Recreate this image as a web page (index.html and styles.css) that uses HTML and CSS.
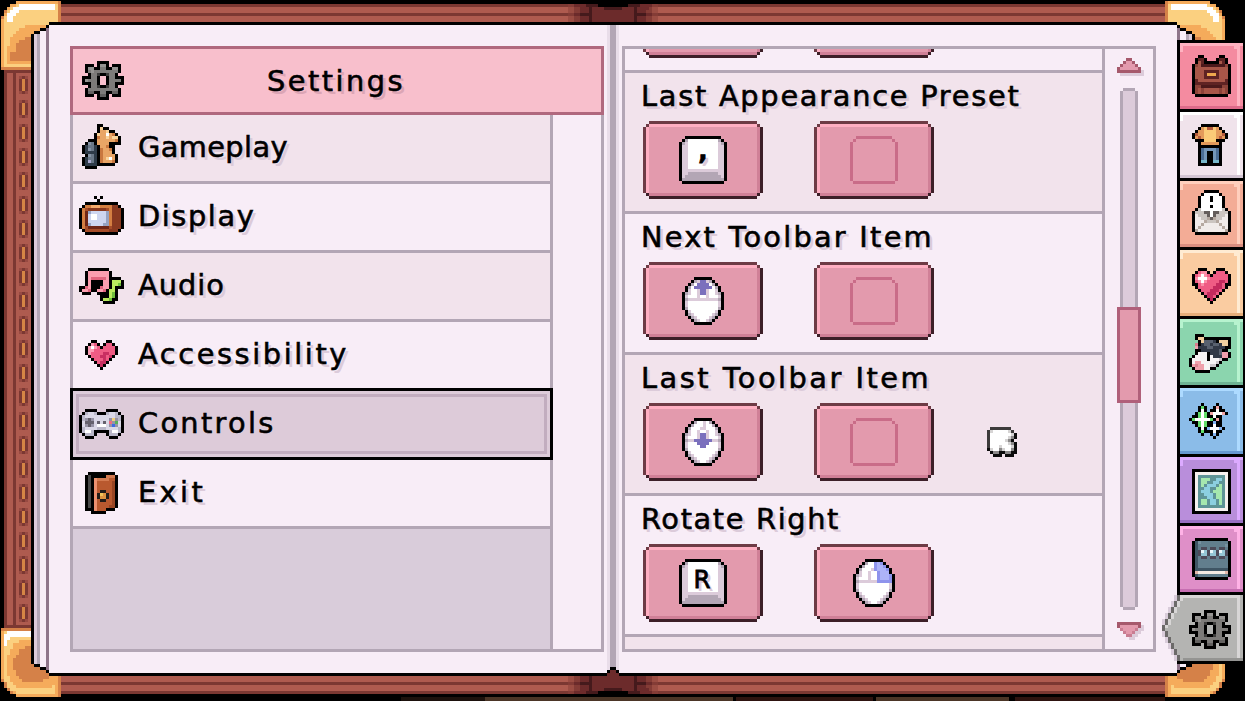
FILE: index.html
```html
<!DOCTYPE html>
<html lang="en">
<head>
    <meta charset="UTF-8">
    <meta name="viewport" content="width=device-width, initial-scale=1.0">
    <title>Settings</title>
    <link rel="stylesheet" href="styles.css">
</head>
<body>
    <div class="book">
        <div class="cover cover-top"></div>
        <div class="cover-left"><div class="stitches"></div></div>
        <div class="cover cover-bottom"></div>
        <svg class="corner corner-tl" data-sprite="cornerTop"></svg>
        <svg class="corner corner-tr" data-sprite="cornerTop"></svg>
        <svg class="corner corner-bl" data-sprite="cornerBottom"></svg>
        <svg class="corner corner-br" data-sprite="cornerBottom"></svg>

        <div class="pages">
            <div class="paper">
                <section class="panel menu-panel">
                    <header class="menu-header">
                        <svg data-sprite="gear"></svg>
                        <h1 class="title">Settings</h1>
                    </header>
                    <div class="menu-body">
                        <nav class="menu">
                            <a class="menu-item gameplay"><span class="icon"><svg data-sprite="chess"></svg></span><span>Gameplay</span></a>
                            <a class="menu-item display"><span class="icon"><svg data-sprite="tv"></svg></span><span>Display</span></a>
                            <a class="menu-item audio"><span class="icon"><svg data-sprite="notes"></svg></span><span>Audio</span></a>
                            <a class="menu-item accessibility"><span class="icon"><svg data-sprite="heart"></svg></span><span>Accessibility</span></a>
                            <a class="menu-item controls selected"><span class="icon"><svg data-sprite="gamepad"></svg></span><span>Controls</span></a>
                            <a class="menu-item exit"><span class="icon"><svg data-sprite="door"></svg></span><span>Exit</span></a>
                        </nav>
                        <div class="menu-gutter"></div>
                    </div>
                </section>

                <section class="panel bindings-panel">
                    <div class="bindings">
                        <div class="binding clipped">
                            <div class="keys"><button class="key-btn"></button><button class="key-btn"></button></div>
                        </div>
                        <div class="binding shade">
                            <h2 class="label preset">Last Appearance Preset</h2>
                            <div class="keys">
                                <button class="key-btn"><svg data-sprite="key"></svg><span class="key-char comma">,</span></button>
                                <button class="key-btn"><svg data-sprite="slot"></svg></button>
                            </div>
                        </div>
                        <div class="binding">
                            <h2 class="label next">Next Toolbar Item</h2>
                            <div class="keys">
                                <button class="key-btn"><svg data-sprite="mouseUp"></svg></button>
                                <button class="key-btn"><svg data-sprite="slot"></svg></button>
                            </div>
                        </div>
                        <div class="binding shade">
                            <h2 class="label last">Last Toolbar Item</h2>
                            <div class="keys">
                                <button class="key-btn"><svg data-sprite="mouseDown"></svg></button>
                                <button class="key-btn"><svg data-sprite="slot"></svg></button>
                            </div>
                        </div>
                        <div class="binding">
                            <h2 class="label rotate">Rotate Right</h2>
                            <div class="keys">
                                <button class="key-btn"><svg data-sprite="key"></svg><span class="key-char">R</span></button>
                                <button class="key-btn"><svg data-sprite="mouseRight"></svg></button>
                            </div>
                        </div>
                        <div class="binding shade rest"></div>
                    </div>
                    <div class="scrollbar">
                        <svg class="arrow" data-sprite="arrow"></svg>
                        <div class="track"><div class="thumb"></div></div>
                        <svg class="arrow" data-sprite="arrowDown"></svg>
                    </div>
                </section>
            </div>
        </div>

        <svg class="spine spine-top" data-sprite="spine"></svg>
        <svg class="spine spine-bottom" data-sprite="spine"></svg>

        <div class="tabs">
            <div class="tab bag"><svg data-sprite="bag"></svg></div>
            <div class="tab outfit"><svg data-sprite="outfit"></svg></div>
            <div class="tab mail"><svg data-sprite="mail"></svg></div>
            <div class="tab love"><svg data-sprite="bigHeart"></svg></div>
            <div class="tab animals"><svg data-sprite="cow"></svg></div>
            <div class="tab skills"><svg data-sprite="sparkles"></svg></div>
            <div class="tab map"><svg data-sprite="map"></svg></div>
            <div class="tab journal"><svg data-sprite="journal"></svg></div>
            <div class="tab active"><svg class="tab-shape" data-sprite="arrowTab"></svg><svg data-sprite="gear"></svg></div>
        </div>

        <svg class="cursor" data-sprite="cursor"></svg>
    </div>

    <script>
        const CELL = 3;

        // every sprite: a palette and one string per pixel row, '.' is transparent
        const sprites = {
            gear: {
                colors: { k: '#000', l: '#969492', g: '#7d7b79', G: '#636160', d: '#3d3c3b' },
                rows: [
                    '.....kkkk.....',
                    '.kkk.kllk.kkk.',
                    '.kllkkggkkllk.',
                    '.kglggggggggk.',
                    '..kggdkkdggk..',
                    'kkkggk..kggkkk',
                    'klgggk..kggggk',
                    'kkkggk..kggkkk',
                    '..kggdkkdggk..',
                    '.kggggggggggk.',
                    '.kGGkkggkkGGk.',
                    '.kkk.kGGk.kkk.',
                    '.....kkkk.....'
                ]
            },
            chess: {
                colors: { k: '#000', t: '#e9a566', o: '#c9773f', y: '#fad39a', w: '#fff', s: '#6a7888', S: '#8593a6', b: '#2e3b49', P: '#a9a9cf' },
                rows: [
                    '.....kk......',
                    '.....kykk....',
                    '.....kttykk..',
                    '....kyttwtok.',
                    '....kottytyyk',
                    '..kkkttttttok',
                    '.kSskttttkkkk',
                    'kbssbkttokk..',
                    'kbSsbkottok..',
                    'kbbbbkotttk..',
                    '.kSsbkottttk.',
                    'kbssbkotywtk.',
                    'kbPsbkotttok.',
                    'kbbbbkkkkkk..',
                    '.kkkk........'
                ]
            },
            tv: {
                colors: { k: '#000', o: '#d47f42', l: '#f5aa6c', r: '#893920', R: '#a64d29', m: '#6f2717', v: '#ced6f0', V: '#97a3c2', w: '#fff' },
                rows: [
                    '.....k.k.......',
                    '......k........',
                    '..kkkkkkkkkkk..',
                    '.koollloooorrk.',
                    'koRrrrrrrRorrrk',
                    'komVvvvvvVorrrk',
                    'komvwwvvvVorrrk',
                    'komvwwvvvVorrrk',
                    'komvvvvvvVorrrk',
                    'komVvvvvVVorrrk',
                    'koRmmmmmmmRrrrk',
                    '.kRRRRRRRRrrrk.',
                    '..kkkkkkkkkkk..'
                ]
            },
            notes: {
                colors: { k: '#000', p: '#fb9eaf', P: '#e2667f', g: '#b9ea5e', G: '#6fbd3d' },
                rows: [
                    '...kkkkkkk.....',
                    '..kpppppppk....',
                    '..kpppppppk....',
                    '..kpPPPPPpkkkk.',
                    '..kpkkkkppkgggk',
                    '..kpkkkkppkggGk',
                    'kkPpkkkPppkgkkk',
                    'kppPkkppPkggk..',
                    '.kkk..kkkkgGk..',
                    '.......kkkgGk..',
                    '.......kggGkk..',
                    '........kkkk...'
                ]
            },
            heart: {
                colors: { k: '#000', p: '#fb9cb4', r: '#ef5c84', d: '#c92f61', w: '#fff' },
                rows: [
                    '..kk...kk..',
                    '.kprk.krrk.',
                    'kpwprkrrrrk',
                    'kpprrrrrrrk',
                    'kprrrrddrrk',
                    '.krrrddrdk.',
                    '..krrrdrk..',
                    '...krddk...',
                    '....kdk....',
                    '.....k.....'
                ]
            },
            gamepad: {
                colors: { k: '#000', g: '#b9b7c8', l: '#dad8e6', G: '#9693a5', d: '#65626d', w: '#fff', y: '#f3d17c', r: '#ef6b83', e: '#55b158', b: '#3c6be6' },
                rows: [
                    '..kkkk...kkkk..',
                    '.kgllgkkkgllgk.',
                    'kgllllllllllggk',
                    'kgGdGlllllGyGgk',
                    'kldddldldlrGelk',
                    'klGdGlwwwlGbGlk',
                    'kgllllgggllllgk',
                    'kgwwgkkkkkgwwgk',
                    '.kgggk...kgggk.',
                    '..kkk.....kkk..'
                ]
            },
            door: {
                colors: { k: '#000', D: '#484848', l: '#ec9170', o: '#d37a50', r: '#b9592f', d: '#994523', n: '#231c18', y: '#f0c35c', Y: '#dd9440' },
                rows: [
                    '.kkkkkkkkk.',
                    'kDkkkkkoook',
                    'kDkloooorrk',
                    'kDklrrrrrdk',
                    'kDklrrrrrdk',
                    'kDklrrrrrdk',
                    'kDklrnnrrdk',
                    'kDklnyYnrdk',
                    'kDklnYYnrdk',
                    'kDklrnnrrdk',
                    'kDklrrrrrdk',
                    'kDklrrrrddk',
                    'kkklrrrkkk.',
                    '..kkkkk....'
                ]
            },
            bag: {
                colors: { k: '#000', r: '#a85648', R: '#8d4339', m: '#5f2323', d: '#4b191b', y: '#efa84e' },
                rows: [
                    '..kk.....kk..',
                    '.kmmk...kmmk.',
                    '.krmkkkkkrmk.',
                    'kRrddddddddRk',
                    'krrrrrrrrrrrk',
                    'krrrmmmmmrrrk',
                    'krrrmyyymrrrk',
                    'krrrmmmmmrrrk',
                    'kmrrrrrrrrrmk',
                    'kmmmmmmmmmmmk',
                    'kRRdddddddRRk',
                    'kRrRrrrrrRrRk',
                    'kRrRrrrrrRrRk',
                    '.kkkkkkkkkkk.'
                ]
            },
            outfit: {
                colors: { k: '#000', o: '#e39a5b', y: '#fbcb78', m: '#b65a3b', b: '#4b6c94', B: '#7495b8', c: '#77b7c9' },
                rows: [
                    '...kkkkkk...',
                    '..koymmyok..',
                    '.kooyyyyook.',
                    'kmooyyyyoomk',
                    'komoyyyyomok',
                    '.kkkyyyykkk.',
                    '..kooooook..',
                    '..kkkkkkkk..',
                    '..kbBBBBbk..',
                    '..kbBkkBbk..',
                    '..kbBkkBbk..',
                    '..kbBkkBbk..',
                    '..kcckkcck..',
                    '..kkkkkkkk..'
                ]
            },
            mail: {
                colors: { k: '#000', W: '#fff', w: '#f0ebea', g: '#cbc5c1', d: '#655e5c', G: '#b5a9a1' },
                rows: [
                    '....kkkkk....',
                    '...kWWWWWk...',
                    '..kWWWkWWWk..',
                    '..kWWWkWWWk..',
                    '..kWWWWWWWk..',
                    '..kWWWkWWWk..',
                    '.kgWWWWWWWgk.',
                    'kgggddWddgggk',
                    'kwgggdWdgggwk',
                    'kwwggGdGggwwk',
                    'kwwwGgggGwwwk',
                    'kwwGwwwwwGwwk',
                    'kwGwwwwwwwGwk',
                    'kGwwwwwwwwwGk',
                    '.kkkkkkkkkkk.'
                ]
            },
            bigHeart: {
                colors: { k: '#000', p: '#fb8fa8', r: '#ef5c84', d: '#c42a5e', w: '#fff' },
                rows: [
                    '..kkk...kkk..',
                    '.krppk.krrrk.',
                    'krpwprkrrrrrk',
                    'kpwwwprrrrrrk',
                    'krpwprrrrddrk',
                    'kkrprrrrddrkk',
                    '.krrrrrdddrk.',
                    '..krrrdddrk..',
                    '...krdddrk...',
                    '....kddrk....',
                    '.....kdk.....',
                    '......k......'
                ]
            },
            cow: {
                colors: { k: '#000', y: '#f1cfa0', b: '#313846', s: '#59616f', p: '#efa0ac', P: '#d97f8e', w: '#f6f3f4', g: '#cdc7cc' },
                rows: [
                    '..kkk.........',
                    '..kyykkkkkkkkk',
                    '...kysssbkyyyk',
                    '..Pkbssbssbyyk',
                    '..pbbbssbbbbkk',
                    '..kkbbbbbbskk.',
                    '..kwwwkbbbsppk',
                    '.kwwwwkwbbbppk',
                    'kwwwwwkwwwgkk.',
                    'kwppwwwwwgk...',
                    'kpPppwwggk....',
                    '.kpppwwkk.....',
                    '..kkkkk.......'
                ]
            },
            sparkles: {
                colors: { k: '#000', w: '#fff', g: '#63dc6b', p: '#f5a5a5', b: '#82b3f2' },
                rows: [
                    '....k....k...',
                    '...kgk..kpk..',
                    '...kwk.kkwkk.',
                    '..kgwgkpwwwpk',
                    '.kkgwgkkwkk..',
                    'kgwwwwwgkpk..',
                    '.kkgwgkkbkk..',
                    '..kgwgkkwkk..',
                    '...kwkbwwwbk.',
                    '...kgkkkwkk..',
                    '....k..kbk...',
                    '........k....'
                ]
            },
            map: {
                colors: { k: '#000', w: '#f6f1ef', T: '#5e9497', G: '#a5e7ae', B: '#8ccfe0' },
                rows: [
                    'kkkkkkkkkkkkk',
                    'kwwwwwwwwwwwk',
                    'kwTTTTTTTTTwk',
                    'kwTGGGTTBBTwk',
                    'kwTGGTTBBTTwk',
                    'kwTGTBBBTGTwk',
                    'kwTTBBTTGGTwk',
                    'kwTBBBTGGGTwk',
                    'kwTTBBBTGGTwk',
                    'kwTTTBBTGGTwk',
                    'kwTGGTBBTGTwk',
                    'kwTGGTBBTGTwk',
                    'kwTTTTTTTTTwk',
                    'kwwwwwwwwwwwk',
                    'kkkkkkkkkkkkk'
                ]
            },
            journal: {
                colors: { k: '#000', s: '#627e8d', S: '#7791a0', d: '#3f5564', D: '#4d4a59', c: '#95c6d5', w: '#e8f6fa', p: '#e3b7ab', W: '#f4eae3' },
                rows: [
                    '.kkkkkkkkkkk.',
                    'kdSsssssssssk',
                    'kdsssssssssSk',
                    'kdsDDsDDsDDsk',
                    'kdDwcDwcDwcDk',
                    'kdDccDccDccDk',
                    'kdsDDsDDsDDsk',
                    'kdssssssssssk',
                    'kdssssssssssk',
                    'kdssssssssssk',
                    'kdddddddddddk',
                    'kpWWWWWWWWWpk',
                    'kdssssssssssk',
                    '.kkkkkkkkkkk.'
                ]
            },
            key: {
                colors: { k: '#000', w: '#fff', l: '#dccbda', g: '#b3a6b5' },
                rows: [
                    '..kkkkkkkkkkkk..',
                    '.kgwwwwwwwwwwgk.',
                    'kglwwwwwwwwwwlgk',
                    'kllwwwwwwwwwwllk',
                    'kllwwwwwwwwwwllk',
                    'kllwwwwwwwwwwllk',
                    'kllwwwwwwwwwwllk',
                    'kllwwwwwwwwwwllk',
                    'kllwwwwwwwwwwllk',
                    'kllwwwwwwwwwwllk',
                    'kllwwwwwwwwwwllk',
                    'kllllllllllllllk',
                    'kllggggggggggllk',
                    'klgggggggggggglk',
                    'kggggggggggggggk',
                    '.kkkkkkkkkkkkkk.'
                ]
            },
            slot: {
                colors: { s: '#c96c88' },
                rows: [
                    '..ssssssssssss..',
                    '.s............s.',
                    's..............s',
                    's..............s',
                    's..............s',
                    's..............s',
                    's..............s',
                    's..............s',
                    's..............s',
                    's..............s',
                    's..............s',
                    's..............s',
                    's..............s',
                    's..............s',
                    's..............s',
                    '.ssssssssssssss.'
                ]
            },
            mouseUp: {
                colors: { k: '#000', w: '#fff', l: '#dccbda', g: '#b3a6b5', v: '#7b70bd' },
                rows: [
                    '....kkkkkk....',
                    '...kglvvlgk...',
                    '..kgwvvvvwgk..',
                    '.kgwvvvvvvwgk.',
                    '.klwwlvvlwwlk.',
                    'kglwwlvvlwwlgk',
                    'klwwwlwwlwwwlk',
                    'kgllllllllllgk',
                    'klwwwwwwwwwwlk',
                    'klwwwwwwwwwwlk',
                    'kgwwwwwwwwwwgk',
                    '.klwwwwwwwwlk.',
                    '.kglwwwwwwlgk.',
                    '..kglwwwwlgk..',
                    '...kglwwlgk...',
                    '....kkkkkk....'
                ]
            },
            mouseDown: {
                colors: { k: '#000', w: '#fff', l: '#dccbda', g: '#b3a6b5', v: '#7b70bd' },
                rows: [
                    '....kkkkkk....',
                    '...kgwwlwgk...',
                    '..kgwwwlwwgk..',
                    '.kgwwwllwwwgk.',
                    '.klwwlwwlwwlk.',
                    'kglwwlvvlwwlgk',
                    'klwwwlvvlwwwlk',
                    'kgllvvvvvvllgk',
                    'klwwwvvvvwwwlk',
                    'klwwwwvvwwwwlk',
                    'kgwwwwwwwwwwgk',
                    '.klwwwwwwwwlk.',
                    '.kglwwwwwwlgk.',
                    '..kglwwwwlgk..',
                    '...kglwwlgk...',
                    '....kkkkkk....'
                ]
            },
            mouseRight: {
                colors: { k: '#000', w: '#fff', l: '#dccbda', g: '#b3a6b5', b: '#adb3f7', B: '#8e93ec' },
                rows: [
                    '....kkkkkk....',
                    '...kgwwBbBk...',
                    '..kgwwwBbbBk..',
                    '.kgwwwlBbbbBk.',
                    '.klwwlwwBbbbk.',
                    'kglwwlwwBbbbBk',
                    'klwwwlwwBbbbBk',
                    'kgllllllBBBBBk',
                    'klwwwwwwwwwwlk',
                    'klwwwwwwwwwwlk',
                    'kgwwwwwwwwwwgk',
                    '.klwwwwwwwwlk.',
                    '.kglwwwwwwlgk.',
                    '..kglwwwwlgk..',
                    '...kglwwlgk...',
                    '....kkkkkk....'
                ]
            },
            arrow: {
                colors: { m: '#a6596c', p: '#e39aad' },
                rows: ['...mm...', '..mppm..', '.mppppm.', 'mppppppm', 'mmmmmmmm']
            },
            arrowDown: {
                colors: { m: '#a6596c', p: '#e39aad', q: '#c97d92' },
                rows: ['mmmmmmmm', 'mppppppm', '.qppppq.', '..qppq..', '...qq...']
            },
            cursor: {
                colors: { d: '#3d3b3b', k: '#0c0c0c', w: '#fff', l: '#d6d4d4', g: '#8b8989' },
                rows: [
                    '.ddddddd..',
                    'dlwwwwwld.',
                    'dwwwwwwwlk',
                    'dwwwwwwlgk',
                    'dwwwwwlgk.',
                    'dwwwwwwlgk',
                    'dwwwlwwwlk',
                    'klwwglwwgk',
                    '.kggkkggkk',
                    '..kkk.kkk.'
                ]
            },
            spine: {
                colors: { k: '#000', a: '#9b4d43', m: '#843c36', c: '#6c2b2b', e: '#451a1c' },
                rows: [
                    'mmcccceeeekkkkkkkkkkeeeeccccmm',
                    'aammcccecccceeeeeecccceccccmaa',
                    'aammccceccccccccccccccecccmmaa',
                    'mmcceeeecccccccccccccceeeeccmm',
                    'aammccceccccccccccccccecccmmaa',
                    'aammccceccccccccccccccecccmmaa',
                    'kkkkkkkkkkkkkcccckkkkkkkkkkkkk',
                    '.............kcck.............',
                    '..............kk..............'
                ]
            },
            cornerTop: {
                colors: { O: '#f5ab5b', D: '#d58148', Y: '#fbd080', W: '#fff' },
                rows: [
                    '.....OOOOOOOOOOOOOOD',
                    '...OOYWWWWWWWWWWWWYD',
                    '..OYWWWWWWWWWWWWWWYD',
                    '.DYWWWYYYYYYYYYYYYYD',
                    '.OWWWYYYYYYYYYYYYYYD',
                    'DYWWYYYYYYYYYYYYYYYD',
                    'OYWWYYYYYYYYYYYYYYYD',
                    'OYYYYYYYYYYYYYYYYYYD',
                    'OYYYYYYYOOOOOOOOOOOD',
                    'OYYYYYOOOOOOOOOOOOOD',
                    'OYYYYOOOOOOOOOOOOOOD',
                    'OYYYOOOOOOOOOOOOOOOD',
                    'OYYOOOOODDDDDDDDDDDD',
                    'OYYOOODDDDDDDDDDDDDD',
                    'OYYOODDDDDDDDDDDDDDD',
                    'OYOOODDDDDDDDDDDDDDD',
                    'OYOOODDDDDDDDDDDDDDD',
                    'OYODDDDDDDDDDDDDDDDD',
                    'OYODDDDDDDDDDDDDDDDD',
                    'OYODDDDDDDDDDDDDDDDD',
                    'OYOOOOOOOOOOOOOOOOOO',
                    'OYYYYYYYYYYYYYYYYYYY',
                    'DDDDDDDDDDDDDDDDDDDD'
                ]
            },
            cornerBottom: {
                colors: { O: '#f5ab5b', D: '#d58148', Y: '#fbd080', W: '#fff' },
                rows: [
                    'DDDDDDDDDDDDDDDDDDDD',
                    'OYWWWWWWWWWWWWWWWWWD',
                    'OWWWWWWWWWWWWWWWWWWD',
                    'OWWYYYYYYYYYYYYYYYYD',
                    'OWYYYYOOOOOOOOOOOOOD',
                    'OWYYOOOOOOOOOOOOOOOD',
                    'OYYYOOOODDDDDDDDDDDD',
                    'OYYOOODDDDDDDDDDDDDD',
                    'OYYOOODDDDDDDDDDDDDD',
                    'OYOOODDDDDDDDDDDDDDD',
                    'OYOODDDDDDDDDDDDDDDD',
                    'OYOODDDDDDDDDDDDDDDD',
                    'OYOODDDDDDDDDDDDDDDD',
                    'OYOODDDDDDDDDDDDDDDD',
                    'OYOOODDDDDDDDDDDDDDD',
                    'OYOOODDDDDDDDDDDDDDD',
                    'OYYOOODDDDDDDDDDOOOD',
                    'DYYOOOODDDDDDDOOOOOD',
                    '.DYYOOOOOOOOOOOOOOOD',
                    '.DYYYOOOOOOOOOOOOYOD',
                    '..DYYYYYYYYYYYYYYYOD',
                    '...DOYYYYYYYYYYYYYOD',
                    '.....OOOOOOOOOOOOOOD'
                ]
            },
            arrowTab: {
                colors: { d: '#6c6a69', f: '#b4b4b2', h: '#d8d6d6', b: '#949492', s: '#d9ccda' },
                rows: arrowTabRows(27, 22)
            }
        };

        // grey bookmark that points at the open page
        function arrowTabRows(width, height) {
            const rows = [];
            for (let y = 0; y < height; y++) {
                const left = Math.max(0, 5 - Math.floor(Math.min(y, height - 1 - y) / 2));
                let body = 'f';
                if (y === 0) body = 'h';
                if (y === height - 1) body = 'b';
                const row = '.'.repeat(Math.max(0, left - 1)) + (left > 0 ? 's' : '') + 'd' + (y < height / 2 ? 'h' : 'f');
                rows.push(row + body.repeat(width - row.length - 2) + (y === height - 1 ? 'bb' : 'hf'));
            }
            return rows;
        }

        function drawSprite(svg) {
            const { colors, rows } = sprites[svg.dataset.sprite];
            const width = rows[0].length;
            svg.setAttribute('viewBox', `0 0 ${width} ${rows.length}`);
            svg.setAttribute('width', width * CELL);
            svg.setAttribute('height', rows.length * CELL);
            svg.setAttribute('shape-rendering', 'crispEdges');
            rows.forEach((row, y) => {
                for (const run of row.matchAll(/([^.])\1*/g)) {
                    const rect = document.createElementNS('http://www.w3.org/2000/svg', 'rect');
                    rect.setAttribute('x', run.index);
                    rect.setAttribute('y', y);
                    rect.setAttribute('width', run[0].length);
                    rect.setAttribute('height', 1);
                    rect.setAttribute('fill', colors[run[1]]);
                    svg.appendChild(rect);
                }
            });
        }

        document.querySelectorAll('[data-sprite]').forEach(drawSprite);
    </script>
</body>
</html>
```
FILE: styles.css
```css
:root {
    --paper: #f8edf7;
    --paper-shade: #f2e3ec;
    --paper-dark: #d9ccda;
    --line: #b3a6b5;
    --shadow: #dccbda;
    --leather: #ae5b4f;
    --leather-dark: #7b3832;
}

* {
    margin: 0;
    padding: 0;
    box-sizing: border-box;
}

body {
    background: #000;
    font-family: "DejaVu Sans", sans-serif;
    font-size: 28.8px;
    color: #000;
    overflow: hidden;
    -webkit-text-stroke: 0.6px #000;
}

svg {
    display: block;
    flex: none;
}

.book {
    position: relative;
    display: grid;
    grid-template-columns: 31px 1146px 68px;
    grid-template-rows: 22px 654px 25px;
    width: 1245px;
    height: 701px;
}

/* leather cover */
.cover {
    height: 18px;
    background: linear-gradient(var(--leather-dark) 3px, var(--leather) 3px 9px, var(--leather-dark) 9px 12px, var(--leather) 12px);
}

.cover-top {
    grid-area: 1 / 1 / 2 / 4;
    margin: 4px 80px 0 61px;
}

.cover-bottom {
    grid-area: 3 / 1 / 4 / 4;
    height: 25px;
    margin: 0 80px 0 61px;
    background:
        linear-gradient(90deg, transparent 340px, #1c110c 340px 424px, #4b3526 424px 672px, #000 672px 675px, #2e130f 675px 812px, #000 812px 815px, #4b3526 815px 948px, #000 948px 954px, #2e130f 954px) 0 21px / 100% 4px no-repeat,
        linear-gradient(var(--leather) 6px, var(--leather-dark) 6px 9px, var(--leather) 9px 15px, var(--leather-dark) 15px 18px, #000 18px);
}

.cover-left {
    grid-area: 1 / 1 / 4 / 2;
    margin: 70px 0 73px 4px;
    padding: 3px 3px 6px 15px;
    border-top: 3px solid var(--leather-dark);
    border-bottom: 3px solid var(--leather-dark);
    background: linear-gradient(90deg, var(--leather-dark) 3px, var(--leather) 3px 9px, var(--leather-dark) 9px 12px, var(--leather) 12px);
}

.stitches {
    height: 546px;
    background:
        linear-gradient(transparent 3px, #d58545 3px 15px, transparent 15px) 3px 0 / 3px 24px repeat-y,
        linear-gradient(var(--leather-dark) 18px, transparent 18px) 3px 0 / 3px 24px repeat-y,
        linear-gradient(#984a42 3px, var(--leather-dark) 3px 15px, #984a42 15px 18px, transparent 18px) 0 0 / 9px 24px repeat-y;
}

.corner {
    grid-area: 1 / 1 / 4 / 4;
}

.corner-tl { margin: 1px 0 0 1px; }
.corner-tr { margin: 1px 20px 0 0; justify-self: end; transform: scaleX(-1); }
.corner-bl { margin: 0 0 4px 1px; align-self: end; }
.corner-br { margin: 0 20px 4px 0; align-self: end; justify-self: end; transform: scaleX(-1); }

/* pages, with stepped corners */
.pages {
    grid-area: 2 / 1 / 3 / 4;
    width: 1164px;
    margin-left: 31px;
    padding: 3px;
    background: #000;
    clip-path: polygon(0 12px, 3px 12px, 3px 9px, 9px 9px, 9px 6px, 15px 6px, 15px 3px, 18px 3px, 18px 0,
        1146px 0, 1146px 3px, 1149px 3px, 1149px 6px, 1155px 6px, 1155px 9px, 1161px 9px, 1161px 12px, 1164px 12px,
        1164px 642px, 1161px 642px, 1161px 645px, 1155px 645px, 1155px 648px, 1149px 648px, 1149px 651px, 1146px 651px, 1146px 654px,
        18px 654px, 18px 651px, 15px 651px, 15px 648px, 9px 648px, 9px 645px, 3px 645px, 3px 642px, 0 642px);
}

.paper {
    display: flex;
    gap: 18px;
    width: 1158px;
    height: 648px;
    padding: 21px 36px;
    background: linear-gradient(90deg,
        var(--shadow) 3px, var(--line) 3px 6px, var(--paper) 6px 12px, #8f758a 12px 15px, var(--paper) 15px 573px,
        #e9dde9 573px 576px, var(--line) 576px 582px, #e9dde9 582px 585px, var(--paper) 585px 1143px,
        #8f758a 1143px 1146px, var(--paper) 1146px 1152px, var(--line) 1152px 1155px, var(--shadow) 1155px);
    clip-path: polygon(0 9px, 6px 9px, 6px 6px, 12px 6px, 12px 3px, 15px 3px, 15px 0,
        1143px 0, 1143px 3px, 1146px 3px, 1146px 6px, 1152px 6px, 1152px 9px, 1158px 9px,
        1158px 639px, 1152px 639px, 1152px 642px, 1146px 642px, 1146px 645px, 1143px 645px, 1143px 648px,
        15px 648px, 15px 645px, 12px 645px, 12px 642px, 6px 642px, 6px 639px, 0 639px);
}

.panel {
    width: 534px;
    height: 606px;
}

.spine {
    grid-area: 1 / 1 / 4 / 4;
    margin-left: 568px;
}

.spine-top { margin-top: 4px; }
.spine-bottom { align-self: end; margin-bottom: 7px; transform: scaleY(-1); }

/* left page */
.menu-panel {
    display: flex;
    flex-direction: column;
}

.menu-header {
    display: flex;
    align-items: center;
    height: 69px;
    padding-left: 9px;
    border: 3px solid #b0687e;
    background: #f8bfcc;
}

.title {
    flex: 1;
    padding-right: 53px;
    font-size: 28.8px;
    font-weight: normal;
    letter-spacing: 2.5px;
    text-align: center;
    text-shadow: 3px 3px 0 #dca5b5;
}

.menu-body {
    flex: 1;
    display: flex;
    border: 3px solid var(--line);
    border-top: 0;
}

.menu {
    width: 480px;
    border-right: 3px solid var(--line);
    background: var(--paper-dark);
}

.menu-gutter {
    flex: 1;
    background: var(--paper);
}

.menu-item {
    display: flex;
    align-items: center;
    height: 69px;
    padding-left: 6px;
    border-bottom: 3px solid var(--line);
    background: var(--paper);
    line-height: 64px;
    text-shadow: 3px 3px 0 var(--shadow);
}

.menu-item span:last-child {
    height: 66px;
}

.icon {
    display: flex;
    justify-content: center;
    width: 45px;
    margin-right: 14px;
}

.gameplay { background: var(--paper-shade); letter-spacing: 0.4px; }
.display { letter-spacing: 1.6px; }
.audio { background: var(--paper-shade); letter-spacing: 1px; }
.accessibility { letter-spacing: 2.6px; }
.controls { letter-spacing: 2.3px; }
.exit { letter-spacing: 3.4px; }

.gameplay svg,
.display svg {
    margin-bottom: 3px;
}

.menu-item.selected {
    height: 72px;
    margin: -3px -3px 0;
    border: 3px solid #000;
    background: #ddcbd9;
    box-shadow: inset 0 0 0 3px #ddcbd9, inset 0 0 0 6px #c2adbf;
}

/* right page */
.bindings-panel {
    display: flex;
    border: 3px solid var(--line);
}

.bindings {
    width: 480px;
    height: 600px;
    border-right: 3px solid var(--line);
    overflow: hidden;
}

.binding {
    display: flex;
    flex-direction: column;
    justify-content: flex-end;
    height: 141px;
    padding: 0 0 12px 18px;
    border-bottom: 3px solid var(--line);
    background: var(--paper);
}

.shade { background: var(--paper-shade); }
.clipped { height: 24px; }
.rest { border-bottom: 0; }

.label {
    height: 48px;
    margin-left: -2px;
    font-size: 28.8px;
    font-weight: normal;
    line-height: 46px;
    white-space: nowrap;
    text-shadow: 3px 3px 0 var(--shadow);
}

.preset { letter-spacing: 1.75px; }
.next { letter-spacing: 2.25px; }
.last { letter-spacing: 2.5px; }
.rotate { letter-spacing: 1.65px; }

.keys {
    display: flex;
    gap: 51px;
}

.key-btn {
    display: grid;
    place-items: center;
    width: 120px;
    height: 78px;
    border: 3px solid;
    border-color: #6e3b45 #3d1f28 #3d1f28 #6e3b45;
    background:
        linear-gradient(#6e3b45, #6e3b45) 0 0 / 3px 3px no-repeat,
        linear-gradient(#6e3b45, #6e3b45) 100% 0 / 3px 3px no-repeat,
        linear-gradient(#3d1f28, #3d1f28) 0 100% / 3px 3px no-repeat,
        linear-gradient(#3d1f28, #3d1f28) 100% 100% / 3px 3px no-repeat,
        linear-gradient(#ffafc2, #ffafc2) 0 0 / 100% 3px no-repeat,
        linear-gradient(#d08097, #d08097) 0 100% / 100% 3px no-repeat,
        linear-gradient(#ffafc2, #ffafc2) 0 0 / 3px 100% no-repeat,
        linear-gradient(#d08097, #d08097) 100% 0 / 3px 100% no-repeat,
        #e39aad;
    clip-path: polygon(0 6px, 3px 6px, 3px 3px, 6px 3px, 6px 0, 114px 0, 114px 3px, 117px 3px, 117px 6px, 120px 6px,
        120px 72px, 117px 72px, 117px 75px, 114px 75px, 114px 78px, 6px 78px, 6px 75px, 3px 75px, 3px 72px, 0 72px);
}

.key-btn > * {
    grid-area: 1 / 1;
}

.key-char {
    padding: 0 2px 7px 0;
    font: 24.5px/30px "DejaVu Sans", sans-serif;
    text-shadow: 3px 3px 0 var(--shadow);
    -webkit-text-stroke: 0.8px #000;
}

.comma {
    padding: 0 0 18px;
    font-weight: bold;
}

.scrollbar {
    flex: 1;
    display: flex;
    flex-direction: column;
    align-items: center;
    padding: 9px 0 12px;
}

.arrow {
    filter: drop-shadow(3px 3px 0 var(--shadow));
}

.track {
    flex: 1;
    width: 18px;
    margin: 15px 0 12px;
    padding-top: 216px;
    border: 3px solid var(--line);
    background: var(--shadow);
    clip-path: polygon(3px 0, 15px 0, 15px 3px, 21px 3px, 21px 519px, 15px 519px, 15px 100%, 3px 100%, 3px 519px, -3px 519px, -3px 3px, 3px 3px);
}

.thumb {
    width: 24px;
    height: 96px;
    margin-left: -6px;
    border: 3px solid #b0607a;
    background: #e39aad;
}

/* side bookmarks */
.tabs {
    grid-area: 1 / 3 / 4 / 4;
    z-index: 2;
    margin-top: 40px;
}

.tab {
    --face: #f48ba0;
    --light: #ffb3c1;
    --dark: #dd6b8a;
    height: 69px;
    padding: 12px 0 0 12px;
    border: solid #000;
    border-width: 3px 2px 0 3px;
    background:
        linear-gradient(var(--light), var(--light)) 0 0 / 3px 9px no-repeat,
        linear-gradient(var(--light), var(--light)) 54px 3px / 3px 3px no-repeat,
        var(--face);
    box-shadow: inset 0 3px var(--light), inset 0 -3px var(--dark), inset -3px 0 var(--face), inset -6px 0 var(--light);
}

.outfit { --face: #f0e3eb; --light: #fff; --dark: #d3c5d3; }
.mail { --face: #f3ac96; --light: #ffcfbd; --dark: #d98e80; padding-top: 9px; }
.love { --face: #facca1; --light: #ffebd2; --dark: #e6ae7b; padding-top: 18px; }
.animals { --face: #8bd5ae; --light: #b7f3cf; --dark: #6eb393; padding: 15px 0 0 9px; }
.skills { --face: #8bbce8; --light: #addaff; --dark: #6698d1; padding: 15px 0 0 9px; }
.map { --face: #b98edb; --light: #dcaaff; --dark: #9970c2; }
.journal { --face: #df8fc8; --light: #ffb2e6; --dark: #c66eb1; }

.tab.active {
    display: grid;
    height: 72px;
    padding: 0;
    border-left: 0;
    border-bottom: 3px solid #000;
    background: none;
    box-shadow: none;
}

.active svg {
    grid-area: 1 / 1;
    margin: 15px 0 0 12px;
}

.active .tab-shape {
    margin: 0 0 0 -15px;
}

.cursor {
    position: absolute;
    left: 987px;
    top: 427px;
    z-index: 3;
}
```
